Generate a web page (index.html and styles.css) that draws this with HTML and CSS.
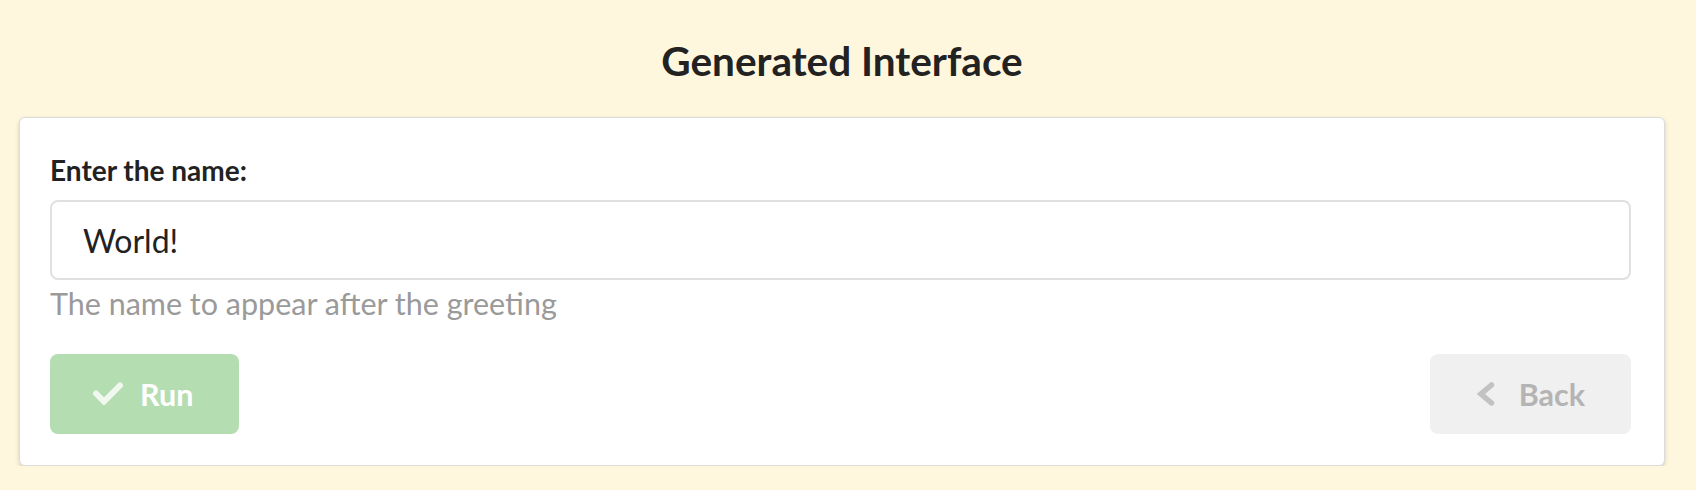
FILE: index.html
```html
<!DOCTYPE html>
<html lang="en">
<head>
<meta charset="utf-8">
<title>Generated Interface</title>
<link rel="stylesheet" href="styles.css">
</head>
<body>
<div class="page">
  <h1 class="title">Generated Interface</h1>
  <div class="card">
    <label class="label" for="name">Enter the name:</label>
    <input class="field" id="name" type="text" value="World!">
    <div class="help">The name to appear after the greeting</div>
    <div class="actions">
      <button class="btn btn-run" type="button">
        <svg class="icon-check" width="30" height="23" viewBox="0 0 30 23" aria-hidden="true">
          <polyline points="3,11.5 11,19.5 27,3.5" fill="none" stroke="currentColor" stroke-width="6" stroke-linejoin="miter" stroke-linecap="round"/>
        </svg>
        <span>Run</span>
      </button>
      <button class="btn btn-back" type="button">
        <svg class="icon-back" width="18" height="24" viewBox="0 0 18 24" aria-hidden="true">
          <polyline points="14.5,3 4,12 14.5,21" fill="none" stroke="currentColor" stroke-width="5.5" stroke-linejoin="miter" stroke-linecap="round"/>
        </svg>
        <span>Back</span>
      </button>
    </div>
  </div>
</div>
</body>
</html>
```

FILE: styles.css
```css
html, body {
  margin: 0;
  padding: 0;
}

body {
  background: #fef7dd;
  font-family: Lato, "Open Sans", "Liberation Sans", sans-serif;
  color: #222222;
}

.page {
  padding: 37px 31px 0 19px;
}

.title {
  margin: 0;
  font-size: 40.5px;
  line-height: 1.2;
  font-weight: 700;
  text-align: center;
  color: #222222;
}

.card {
  margin-top: 31px;
  background: #ffffff;
  border: 1px solid #dcdcdc;
  border-radius: 6px;
  box-shadow: 0 2px 4px rgba(34, 36, 38, 0.18);
  padding: 36px 33px 31px 30px;
  display: flex;
  flex-direction: column;
}

.label {
  font-size: 28px;
  line-height: 1.2;
  font-weight: 700;
  color: #222222;
}

.field {
  margin-top: 13px;
  box-sizing: border-box;
  height: 80px;
  width: 100%;
  border: 2px solid #e0e0e0;
  border-radius: 8px;
  padding: 0 31px;
  font-family: inherit;
  font-size: 32px;
  color: #222222;
  background: #ffffff;
  outline: none;
}

.help {
  margin-top: 5px;
  font-size: 30.5px;
  line-height: 1.2;
  color: #9a9a9a;
}

.actions {
  margin-top: 32px;
  display: flex;
  justify-content: space-between;
}

.btn {
  box-sizing: border-box;
  height: 80px;
  border: none;
  border-radius: 8px;
  display: inline-flex;
  align-items: center;
  font-family: inherit;
  font-size: 30.5px;
  font-weight: 700;
  cursor: default;
}

.btn-run {
  background: #b5ddb2;
  color: #ffffff;
  padding: 0 46px 0 43px;
  gap: 17px;
}

.icon-check {
  color: rgba(255, 255, 255, 0.8);
  display: block;
}

.btn-back {
  background: #f0f0f0;
  color: #b4b4b4;
  padding: 0 46px 0 47px;
  gap: 24px;
}

.icon-back {
  color: #c2c2c2;
  display: block;
}
```
